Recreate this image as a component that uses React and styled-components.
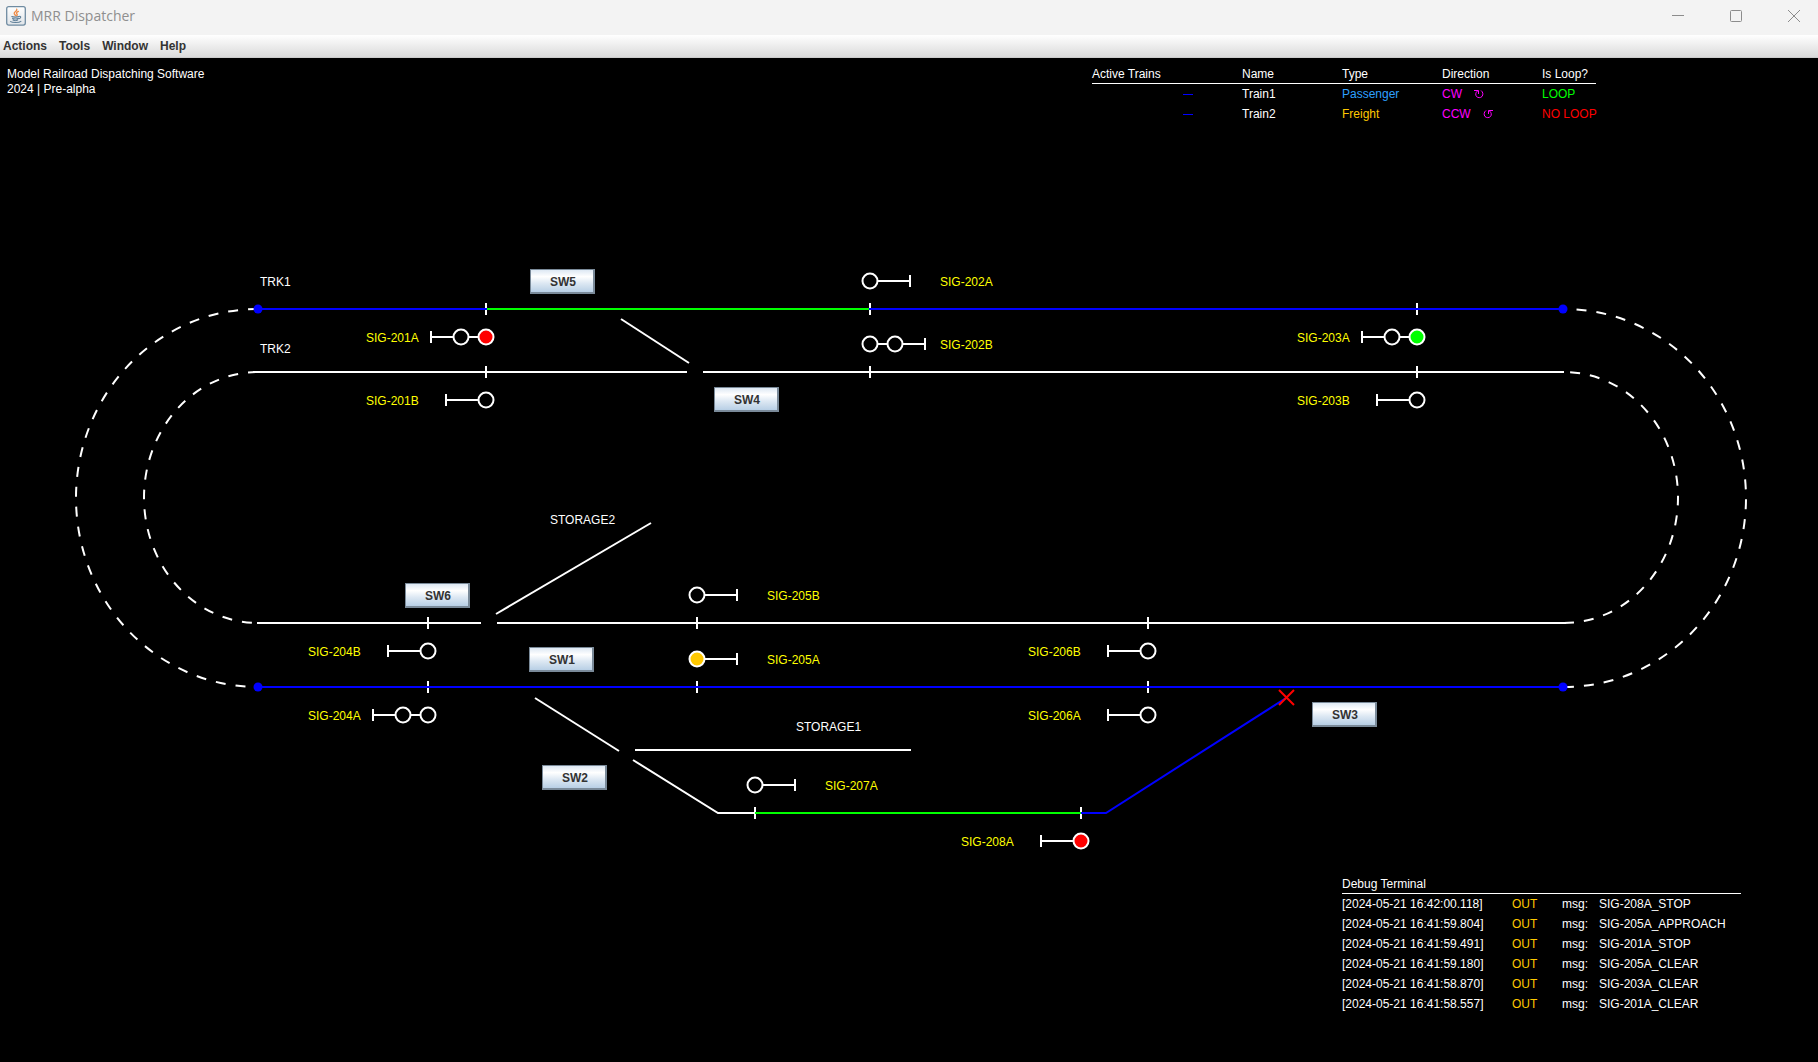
import React from "react";
import styled, { createGlobalStyle } from "styled-components";

const GlobalStyle = createGlobalStyle`
  * { box-sizing: border-box; }
  html, body, #root { height: 100%; }
  body {
    margin: 0;
    background: #000;
    font-family: "Liberation Sans", Arial, sans-serif;
    font-size: 12px;
  }
`;

const color = {
  white: "#ffffff",
  blue: "#0000ff",
  green: "#00ff00",
  red: "#ff0000",
  yellow: "#ffff00",
  orange: "#ffc800",
  sky: "#2ea0ff",
  magenta: "#ff00ff",
};

/* ---------- window frame ---------- */

const Window = styled.div`
  display: flex;
  flex-direction: column;
  min-height: 100%;
  background: #000;
`;

const TitleBar = styled.header`
  display: flex;
  align-items: center;
  height: 35px;
  padding: 0 12px 4px 6px;
  background: #f3f3f3;
`;

const Title = styled.h1`
  flex: 1;
  margin: 0 0 0 5px;
  font: 400 14px/20px "Open Sans", "Noto Sans", sans-serif;
  color: #8f8f8f;
`;

const Controls = styled.div`
  display: flex;
  gap: 34px;
`;

const ControlButton = styled.button`
  display: flex;
  align-items: center;
  justify-content: center;
  width: 24px;
  height: 24px;
  padding: 0;
  border: 0;
  background: none;
`;

const MenuBar = styled.nav`
  display: flex;
  gap: 12px;
  height: 23px;
  padding: 0 3px;
  border-bottom: 1px solid #cccccc;
  background: linear-gradient(#ffffff, #dadada);
`;

const MenuButton = styled.button`
  padding: 0;
  border: 0;
  background: none;
  font: 700 12px/22px "Liberation Sans", Arial, sans-serif;
  color: #333;
`;

/* ---------- dispatch board ---------- */

const Board = styled.main`
  flex: 1;
  padding-top: 9px;
  color: #fff;
`;

const BoardHeader = styled.div`
  display: flex;
  justify-content: space-between;
  align-items: flex-start;
  padding: 0 222px 0 7px;
`;

const About = styled.p`
  margin: 0;
  line-height: 15px;
`;

const DataTable = styled.table`
  width: ${(p) => p.$width}px;
  table-layout: fixed;
  border-collapse: separate;
  border-spacing: 0;
  white-space: nowrap;
  text-align: left;
`;

const Col = styled.col`
  width: ${(p) => p.$width}px;
`;

const HeadCell = styled.th`
  padding: 0 0 2px;
  border-bottom: 1px solid #fff;
  font-weight: 400;
  line-height: 14px;
`;

const Cell = styled.td`
  padding: 1px 0;
  line-height: 18px;
  color: ${(p) => p.$color || "#fff"};
`;

const TrainMark = styled.div`
  width: 10px;
  height: 1px;
  margin-left: 91px;
  background: ${(p) => p.$color};
`;

const DirectionCell = styled.div`
  display: flex;
  gap: 12px;
`;

const Arrow = styled.svg`
  align-self: center;
`;

const Diagram = styled.section`
  position: relative;
  height: 753px;
  overflow: hidden;
`;

const TrackPlan = styled.svg`
  display: block;
  width: 100%;
  height: 100%;
  fill: none;
  stroke-width: 2;
`;

const PlanText = styled.text`
  fill: ${(p) => p.$color};
  stroke: none;
`;

const SwitchButton = styled.button`
  position: absolute;
  left: ${(p) => p.$x}px;
  top: ${(p) => p.$y}px;
  width: 65px;
  height: 25px;
  padding: 2px 0 0 2px;
  border: solid #7a8a99;
  border-width: 1px 2px 2px 1px;
  background: linear-gradient(#dde8f3, #ffffff 30%, #dde8f3 60%, #b8cfe5);
  font: 700 12px/20px "Liberation Sans", Arial, sans-serif;
  color: #333;
`;

const TerminalDock = styled.div`
  display: flex;
  justify-content: flex-end;
  padding: 0 77px 48px 0;
`;

/* ---------- data ---------- */

const PLAN_TOP = 124;

const trains = [
  { name: "Train1", type: "Passenger", typeColor: color.sky, dir: "CW", loop: "LOOP", loopColor: color.green },
  { name: "Train2", type: "Freight", typeColor: color.orange, dir: "CCW", loop: "NO LOOP", loopColor: color.red },
];

const messages = [
  ["16:42:00.118", "SIG-208A_STOP"],
  ["16:41:59.804", "SIG-205A_APPROACH"],
  ["16:41:59.491", "SIG-201A_STOP"],
  ["16:41:59.180", "SIG-205A_CLEAR"],
  ["16:41:58.870", "SIG-203A_CLEAR"],
  ["16:41:58.557", "SIG-201A_CLEAR"],
];

const curves = [
  "M258 309 A182 189 0 0 0 258 687",
  "M258 372 A114 125.5 0 0 0 258 623",
  "M1564 687 A182 189 0 0 0 1564 309",
  "M1564 623 A114 125.5 0 0 0 1564 372",
];

const tracks = [
  { d: "M253 372 H687", c: color.white },
  { d: "M703 372 H1564", c: color.white },
  { d: "M257 623 H481", c: color.white },
  { d: "M497 623 H1566", c: color.white },
  { d: "M621 319 L689 363", c: color.white },
  { d: "M496 614 L651 523", c: color.white },
  { d: "M535 698 L619 751", c: color.white },
  { d: "M633 760 L718 813 H755", c: color.white },
  { d: "M635 750 H911", c: color.white },
];

const occupied = [
  { d: "M486 309 H870", c: color.green },
  { d: "M755 813 H1081", c: color.green },
  { d: "M258 309 H487", c: color.blue },
  { d: "M869 309 H1563", c: color.blue },
  { d: "M258 687 H1563", c: color.blue },
  { d: "M1081 813 H1106 L1286 698", c: color.blue },
];

const ticks = [
  [486, 309], [870, 309], [1417, 309],
  [486, 372], [870, 372], [1417, 372],
  [428, 623], [697, 623], [1148, 623],
  [428, 687], [697, 687], [1148, 687],
  [755, 813], [1081, 813],
];

const endpoints = [[258, 309], [1563, 309], [258, 687], [1563, 687]];

/* lamps: first one sits over the track joint */
const signals = [
  { id: "SIG-201A", y: 337, lamps: [486, 461], bar: 431, text: 366, lit: color.red },
  { id: "SIG-201B", y: 400, lamps: [486], bar: 446, text: 366 },
  { id: "SIG-202A", y: 281, lamps: [870], bar: 910, text: 940 },
  { id: "SIG-202B", y: 344, lamps: [870, 895], bar: 925, text: 940 },
  { id: "SIG-203A", y: 337, lamps: [1417, 1392], bar: 1362, text: 1297, lit: color.green },
  { id: "SIG-203B", y: 400, lamps: [1417], bar: 1377, text: 1297 },
  { id: "SIG-204B", y: 651, lamps: [428], bar: 388, text: 308 },
  { id: "SIG-204A", y: 715, lamps: [428, 403], bar: 373, text: 308 },
  { id: "SIG-205B", y: 595, lamps: [697], bar: 737, text: 767 },
  { id: "SIG-205A", y: 659, lamps: [697], bar: 737, text: 767, lit: color.orange },
  { id: "SIG-206B", y: 651, lamps: [1148], bar: 1108, text: 1028 },
  { id: "SIG-206A", y: 715, lamps: [1148], bar: 1108, text: 1028 },
  { id: "SIG-207A", y: 785, lamps: [755], bar: 795, text: 825 },
  { id: "SIG-208A", y: 841, lamps: [1081], bar: 1041, text: 961, lit: color.red },
];

const trackNames = [
  ["TRK1", 260, 286],
  ["TRK2", 260, 353],
  ["STORAGE2", 550, 524],
  ["STORAGE1", 796, 731],
];

const switches = [
  ["SW5", 530, 269],
  ["SW4", 714, 387],
  ["SW6", 405, 583],
  ["SW1", 529, 647],
  ["SW2", 542, 765],
  ["SW3", 1312, 702],
];

/* ---------- parts ---------- */

function JavaIcon() {
  return (
    <svg width="20" height="20" viewBox="0 0 20 20" fill="none" aria-hidden="true">
      <defs>
        <linearGradient id="cupPlate" x1="0" y1="0" x2="0" y2="1">
          <stop offset="0" stopColor="#ffffff" />
          <stop offset="1" stopColor="#dfe4e8" />
        </linearGradient>
      </defs>
      <rect x="0.7" y="0.7" width="18.6" height="18.4" rx="2" fill="url(#cupPlate)" stroke="#6f8ba1" strokeWidth="1.3" />
      <path d="M10.8 3.2c.8 1.7-2.8 2.5-2.6 4.1.1.9 1 1.4 1.2 2.2M12.4 5.4c-1.8.8-2.4 1.6-1.5 2.6.6.7.3 1.3-.3 1.7" stroke="#ee8a45" strokeWidth="1.3" strokeLinecap="round" />
      <path d="M5.8 10.5c1 .8 6 .8 7 0M6.6 12.4c1.3.7 4.4.7 5.600 0M7 14.100c1.200.6 3.500.6 4.700 0M4.600 15.600c1.800 1.200 8.600 1.200 10.300-.2M13.200 10.400c1.800-.6 2.400 1.400-.2 2.400" stroke="#5f7f98" strokeWidth="1.1" strokeLinecap="round" />
    </svg>
  );
}

function TurnArrow({ flip }) {
  return (
    <Arrow width="10" height="10" viewBox="0 0 10 10" fill="none" stroke={color.magenta} aria-hidden="true">
      <g transform={flip ? "translate(10 0) scale(-1 1)" : undefined}>
        <path d="M0 1.500H4.500V5M3.500 2C1.500 3.500 1.200 6 2.500 7.500C4 9 6.500 9 8 7.500C9.500 5.500 9 3 7 1.500" />
      </g>
    </Arrow>
  );
}

function Signal({ id, y, lamps, bar, text, lit }) {
  return (
    <g>
      <path d={`M${lamps[0]} ${y}H${bar}M${bar} ${y - 6}V${y + 6}`} stroke={color.white} />
      {lamps.map((x, i) => (
        <circle key={x} cx={x} cy={y} r="7.5" fill={i === 0 && lit ? lit : "#000"} stroke={color.white} />
      ))}
      <PlanText x={text} y={y + 5} $color={color.yellow}>{id}</PlanText>
    </g>
  );
}

function TrackDiagram() {
  return (
    <Diagram aria-label="Track plan">
      <TrackPlan>
        <g transform={`translate(0 ${-PLAN_TOP})`}>
          {curves.map((d) => (
            <path key={d} d={d} stroke={color.white} strokeDasharray="10 10" />
          ))}
          {tracks.map(({ d, c }) => <path key={d} d={d} stroke={c} />)}
          {ticks.map(([x, y]) => (
            <path key={`${x}-${y}`} d={`M${x} ${y - 6}V${y + 6}`} stroke={color.white} />
          ))}
          {occupied.map(({ d, c }) => <path key={d} d={d} stroke={c} />)}
          {endpoints.map(([x, y]) => (
            <circle key={`${x}-${y}`} cx={x} cy={y} r="4.5" fill={color.blue} />
          ))}
          <path d="M1279 690L1294 705M1294 690L1279 705" stroke={color.red} />
          {signals.map((s) => <Signal key={s.id} {...s} />)}
          {trackNames.map(([label, x, y]) => (
            <PlanText key={label} x={x} y={y} $color={color.white}>{label}</PlanText>
          ))}
        </g>
      </TrackPlan>
      {switches.map(([label, x, y]) => (
        <SwitchButton key={label} type="button" $x={x} $y={y - PLAN_TOP}>{label}</SwitchButton>
      ))}
    </Diagram>
  );
}

function TrainTable() {
  return (
    <DataTable $width={504}>
      <colgroup>
        <Col $width={150} />
        <Col $width={100} />
        <Col $width={100} />
        <Col $width={100} />
        <Col $width={54} />
      </colgroup>
      <thead>
        <tr>
          {["Active Trains", "Name", "Type", "Direction", "Is Loop?"].map((h) => (
            <HeadCell key={h} scope="col">{h}</HeadCell>
          ))}
        </tr>
      </thead>
      <tbody>
        {trains.map((t) => (
          <tr key={t.name}>
            <Cell><TrainMark $color={color.blue} /></Cell>
            <Cell>{t.name}</Cell>
            <Cell $color={t.typeColor}>{t.type}</Cell>
            <Cell $color={color.magenta}>
              <DirectionCell>
                {t.dir}
                <TurnArrow flip={t.dir === "CCW"} />
              </DirectionCell>
            </Cell>
            <Cell $color={t.loopColor}>{t.loop}</Cell>
          </tr>
        ))}
      </tbody>
    </DataTable>
  );
}

function DebugTerminal() {
  return (
    <DataTable $width={399}>
      <colgroup>
        <Col $width={170} />
        <Col $width={50} />
        <Col $width={37} />
        <Col $width={142} />
      </colgroup>
      <thead>
        <tr>
          <HeadCell scope="col" colSpan={4}>Debug Terminal</HeadCell>
        </tr>
      </thead>
      <tbody>
        {messages.map(([time, msg]) => (
          <tr key={time}>
            <Cell>[2024-05-21 {time}]</Cell>
            <Cell $color={color.orange}>OUT</Cell>
            <Cell>msg:</Cell>
            <Cell>{msg}</Cell>
          </tr>
        ))}
      </tbody>
    </DataTable>
  );
}

export default function App() {
  return (
    <>
      <GlobalStyle />
      <Window>
        <TitleBar>
          <JavaIcon />
          <Title>MRR Dispatcher</Title>
          <Controls>
            <ControlButton type="button" aria-label="Minimize">
              <svg width="12" height="12" stroke="#8c8c8c" shapeRendering="crispEdges"><path d="M0 5.5H12" /></svg>
            </ControlButton>
            <ControlButton type="button" aria-label="Maximize">
              <svg width="12" height="12" stroke="#8c8c8c" fill="none"><rect x="0.5" y="0.5" width="11" height="11" rx="1" /></svg>
            </ControlButton>
            <ControlButton type="button" aria-label="Close">
              <svg width="12" height="12" stroke="#8c8c8c"><path d="M0 0L12 12M12 0L0 12" /></svg>
            </ControlButton>
          </Controls>
        </TitleBar>
        <MenuBar>
          {["Actions", "Tools", "Window", "Help"].map((m) => (
            <MenuButton key={m} type="button">{m}</MenuButton>
          ))}
        </MenuBar>
        <Board>
          <BoardHeader>
            <About>
              Model Railroad Dispatching Software
              <br />
              2024 | Pre-alpha
            </About>
            <TrainTable />
          </BoardHeader>
          <TrackDiagram />
          <TerminalDock>
            <DebugTerminal />
          </TerminalDock>
        </Board>
      </Window>
    </>
  );
}
